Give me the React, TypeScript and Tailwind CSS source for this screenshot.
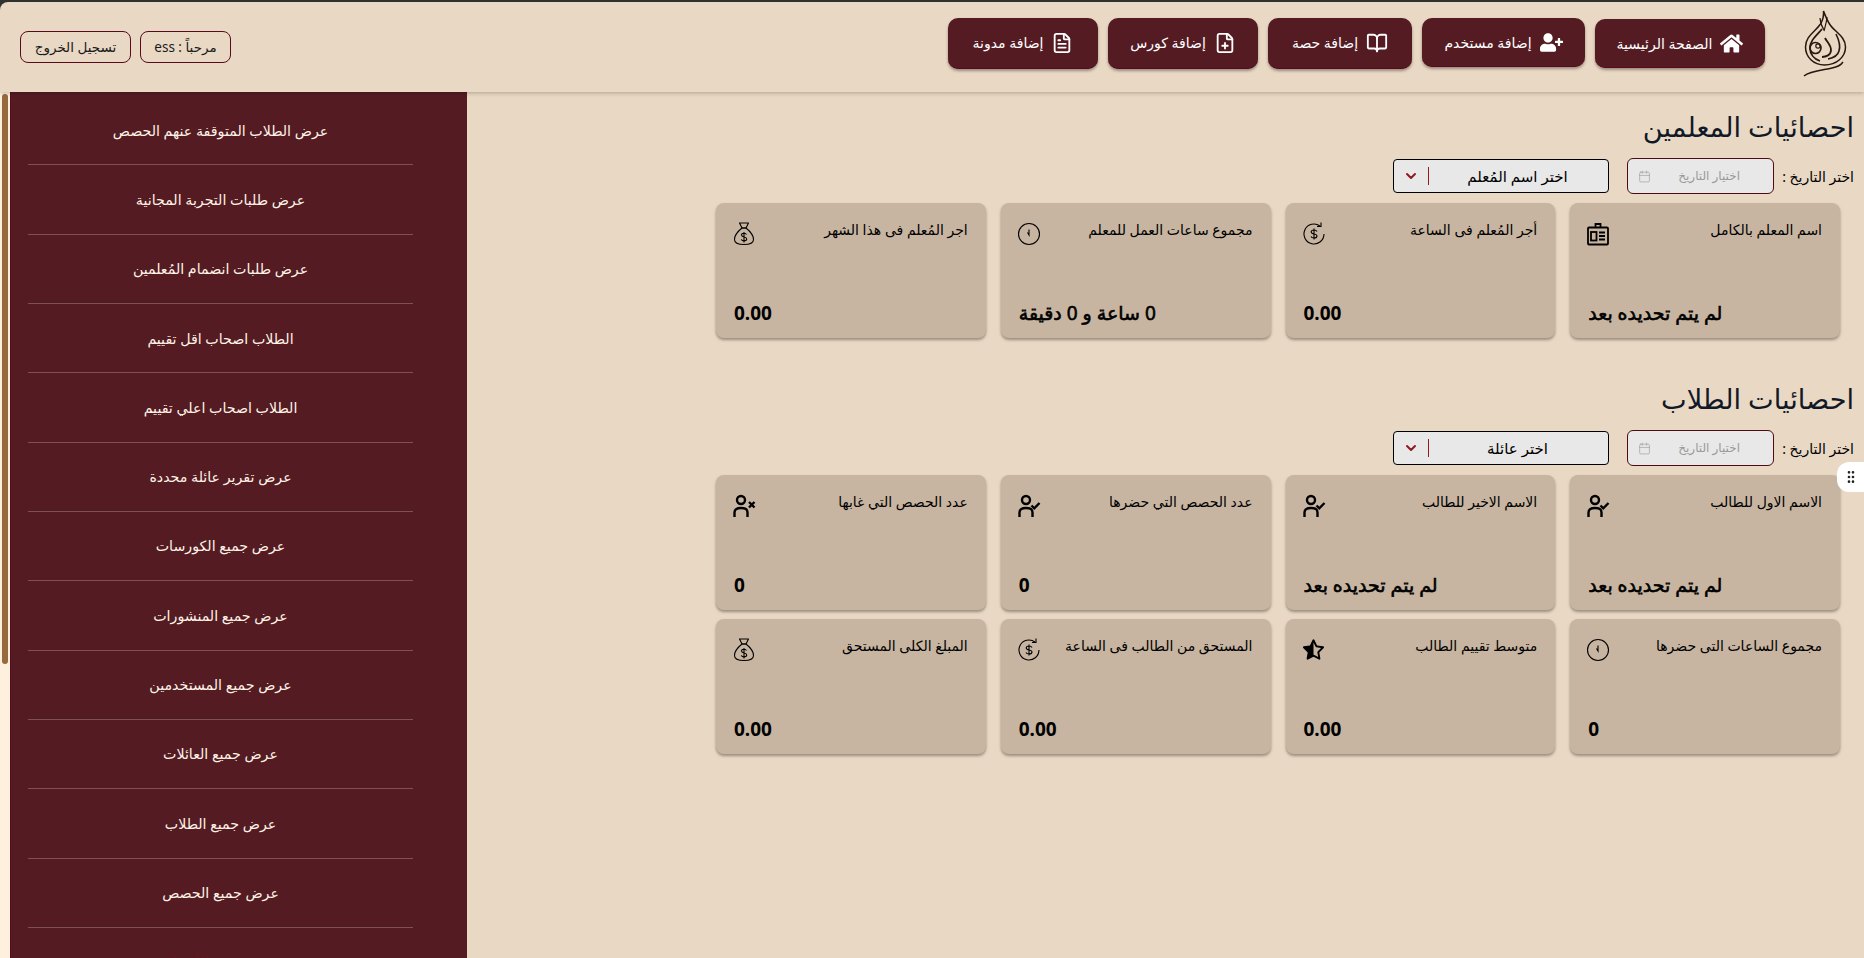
import { ChevronDown, FileText, FilePlus, BookOpen, Calendar, GripVertical } from "lucide-react";
import { FaHome, FaUserPlus } from "react-icons/fa";
import { FaRegStarHalfStroke } from "react-icons/fa6";
import type { ReactNode } from "react";

const FONT = "font-['Noto_Sans','DejaVu_Sans',sans-serif]";

const NAV = [
  { label: "الصفحة الرئيسية", icon: <FaHome size={23} />, size: "w-[170px] h-[49px] mt-px" },
  { label: "إضافة مستخدم", icon: <FaUserPlus size={23} />, size: "w-[163px] h-[49px] -mt-px" },
  { label: "إضافة حصة", icon: <BookOpen size={22} />, size: "w-[144px] h-[51px]" },
  { label: "إضافة كورس", icon: <FilePlus size={22} />, size: "w-[150px] h-[51px]" },
  { label: "إضافة مدونة", icon: <FileText size={22} />, size: "w-[150px] h-[51px]" },
];

const SIDE = [
  "عرض الطلاب المتوقفة عنهم الحصص",
  "عرض طلبات التجربة المجانية",
  "عرض طلبات انضمام المُعلمين",
  "الطلاب اصحاب اقل تقييم",
  "الطلاب اصحاب اعلي تقييم",
  "عرض تقرير عائلة محددة",
  "عرض جميع الكورسات",
  "عرض جميع المنشورات",
  "عرض جميع المستخدمين",
  "عرض جميع العائلات",
  "عرض جميع الطلاب",
  "عرض جميع الحصص",
];

function Logo() {
  return (
    <svg width="44" height="67" viewBox="0 0 44 67" fill="none" stroke="#2a1710" strokeWidth="1.2" className="ml-[28px]">
      <path d="M20.500 1c.5 6-.5 9-3 13C12 22 2.500 26 2.500 37c0 10 8 18 19 18 12 0 21-8 21-18 0-11-11-15-16-23-2.500-4-4-8-6-13z" strokeWidth="1.500" />
      <path d="M17 8c.5 6 2 9 4 12M24 7c-.5 6-2 10-3 14" />
      <path d="M19 19C14 25 7 30 7 38c0 6 4 11 10 13" strokeWidth="1.800" />
      <circle cx="12.500" cy="38" r="5.500" strokeWidth="1.600" />
      <circle cx="15" cy="36" r="2.200" />
      <path d="M22 28c2 4 6 7 6 12 0 5-5 7-9 7" strokeWidth="1.800" />
      <path d="M33 24c3 6 5 11 3 17-1 4-6 7-11 8" strokeWidth="1.600" />
      <path d="M1 66c6-5 20-6 28-8 5-1 9-3 11-6" strokeWidth="1.500" />
    </svg>
  );
}

function MoneyBag() {
  return (
    <svg width="24" height="24" viewBox="0 0 24 24" fill="none" stroke="currentColor" strokeWidth="1.100">
      <path d="M7.500 1h9l-2.500 5h-4z" strokeLinejoin="round" />
      <path d="M10 6C5 10 2.500 14 2.500 17.500c0 3.500 3 5 9.500 5s9.500-1.500 9.500-5C21.500 14 19 10 14 6z" strokeLinejoin="round" />
      <path d="M14.500 12.500c-.5-1-1.500-1.300-2.500-1.300-1.500 0-2.500.7-2.500 1.900 0 2.700 5.200 1.200 5.200 3.900 0 1.200-1.200 1.900-2.700 1.900-1.200 0-2.300-.5-2.700-1.500M12 10v10.500" />
    </svg>
  );
}

function ClockThin() {
  return (
    <svg width="24" height="24" viewBox="0 0 24 24" fill="none" stroke="currentColor" strokeWidth="1.100">
      <circle cx="12" cy="12" r="10.500" />
      <path d="M12 7.500V13L10.500 10.500" />
    </svg>
  );
}

function IdCard() {
  return (
    <svg width="24" height="24" viewBox="0 0 24 24" fill="none" stroke="currentColor" strokeWidth="1.800">
      <rect x="2" y="5.500" width="20" height="17" rx="1" />
      <path d="M9.500 5.500V2h5v3.500" />
      <rect x="5" y="10" width="5.500" height="8.500" />
      <path d="M13 10.500h6M13 14h6M13 17.500h6" />
    </svg>
  );
}

function Refresh() {
  return (
    <svg width="24" height="24" viewBox="0 0 24 24" fill="none" stroke="currentColor" strokeWidth="1.100">
      <path d="M22 12A10 10 0 1 1 18 4" />
      <path d="M19 .5V4.500h-4" />
      <path d="M15 9.500c-.5-1-1.600-1.500-3-1.500-1.600 0-2.800.8-2.800 2 0 2.800 5.800 1.300 5.800 4 0 1.200-1.300 2-3 2-1.400 0-2.600-.6-3-1.500M12 6.500v11" />
    </svg>
  );
}

function Person({ mark }: { mark: "check" | "x" }) {
  return (
    <svg width="24" height="24" viewBox="0 0 24 24" fill="none" stroke="currentColor" strokeWidth="2.400">
      <circle cx="9" cy="6" r="4" />
      <path d="M2.500 23v-4.500c0-3 2-4.500 6.500-4.500s6.500 1.500 6.500 4.500V23" />
      {mark === "check" ? <path d="M14.500 11.500l2.800 2.800L22.500 9" /> : <path d="M17 8l5.500 5.500M22.500 8L17 13.500" />}
    </svg>
  );
}

type Card = { title: string; value: string; icon: ReactNode };

const TEACHER: Card[] = [
  { title: "اسم المعلم بالكامل", value: "لم يتم تحديده بعد", icon: <IdCard /> },
  { title: "أجر المُعلم فى الساعة", value: "0.00", icon: <Refresh /> },
  { title: "مجموع ساعات العمل للمعلم", value: "0 ساعة و 0 دقيقة", icon: <ClockThin /> },
  { title: "اجر المُعلم فى هذا الشهر", value: "0.00", icon: <MoneyBag /> },
];

const STUDENT: Card[] = [
  { title: "الاسم الاول للطالب", value: "لم يتم تحديده بعد", icon: <Person mark="check" /> },
  { title: "الاسم الاخير للطالب", value: "لم يتم تحديده بعد", icon: <Person mark="check" /> },
  { title: "عدد الحصص التي حضرها", value: "0", icon: <Person mark="check" /> },
  { title: "عدد الحصص التي غابها", value: "0", icon: <Person mark="x" /> },
  { title: "مجموع الساعات التى حضرها", value: "0", icon: <ClockThin /> },
  { title: "متوسط تقييم الطالب", value: "0.00", icon: <FaRegStarHalfStroke size={23} /> },
  { title: "المستحق من الطالب فى الساعة", value: "0.00", icon: <Refresh /> },
  { title: "المبلغ الكلى المستحق", value: "0.00", icon: <MoneyBag /> },
];

function StatCard({ title, value, icon }: Card) {
  const numeric = /^[\d.]+$/.test(value);
  return (
    <div className="h-[135px] rounded-lg bg-[#c7b5a1] pr-[18px] pl-[18px] pt-[17px] pb-[11px] shadow-[0_2px_3px_rgba(0,0,0,0.35)] flex flex-col justify-between text-black">
      <div className="flex justify-between items-start">
        <span className="text-[14px] leading-5">{title}</span>
        <span className="shrink-0 -ml-0.5 mt-0.5">{icon}</span>
      </div>
      <div className="flex justify-end">
        {numeric ? (
          <span className="text-[19px] leading-7 font-bold">{value}</span>
        ) : (
          <span className="text-[19px] leading-7 [-webkit-text-stroke:0.6px_black]">{value}</span>
        )}
      </div>
    </div>
  );
}

function Filters({ placeholder }: { placeholder: string }) {
  return (
    <div className="flex items-center h-9 mt-[13px] mb-[9px]">
      <span className="text-[14px] text-black w-[72px] shrink-0">اختر التاريخ :</span>
      <div className="w-[147px] h-9 mr-2 rounded-md border border-[#4f0a14] bg-[#e8e8e8] flex items-center justify-between px-2.5 text-[12px] text-[#9a9a9a]">
        <span className="pr-[23px]">اختيار التاريخ</span>
        <Calendar size={13} strokeWidth={1.2} />
      </div>
      <div className="w-[216px] h-[34px] mr-[18px] rounded border border-black bg-[#e8e8e8] flex items-center text-[15px] text-black">
        <span className="flex-1 text-center pr-0.5 font-normal">{placeholder}</span>
        <span className="w-px h-[18px] bg-[#8f1a1f]" />
        <ChevronDown size={16} strokeWidth={3} className="mx-[9px] text-[#8f1a1f]" />
      </div>
    </div>
  );
}

export default function App() {
  return (
    <div dir="rtl" className={`relative h-[958px] overflow-hidden bg-[#e9d8c3] flex flex-col ${FONT}`}>
      <div className="bg-[#333333] pt-0.5 shrink-0 relative z-10">
        <header className="h-[90px] flex items-center justify-between pr-[17px] pl-5 rounded-tl-lg shadow-[0_1px_4px_rgba(0,0,0,0.25)] bg-[#e9d8c3]">
          <div className="flex items-center gap-2.5 -mt-2">
            <Logo />
            {NAV.map((n) => (
              <button key={n.label} className={`flex items-center justify-center gap-2 rounded-[10px] bg-[#541b23] text-white text-[14px] font-medium shadow-[0_2px_3px_rgba(0,0,0,0.35)] border-b border-[#5a0a1a] ${n.size}`}>
                {n.icon}
                <span>{n.label}</span>
              </button>
            ))}
          </div>
          <div className="flex items-center gap-[9px] text-[13.500px] text-[#1a1a1a]">
            <div className="w-[91px] h-8 rounded-lg border border-[#5a0a1a] flex items-center justify-center">مرحباً : ess</div>
            <div className="w-[111px] h-8 rounded-lg border border-[#5a0a1a] flex items-center justify-center">تسجيل الخروج</div>
          </div>
        </header>
      </div>

      <div className="flex flex-1 min-h-0">
        <main className="flex-1 pr-2.5 pt-[17px]">
          <h2 className="text-[27.200px] leading-9 text-[#111827]">احصائيات المعلمين</h2>
          <Filters placeholder="اختر اسم المُعلم" />
          <div className="grid grid-cols-4 gap-x-[15px] gap-y-[9px] w-[1124px] mr-3.5">
            {TEACHER.map((c) => <StatCard key={c.title} {...c} />)}
          </div>
          <h2 className="text-[27.200px] leading-9 text-[#111827] mt-[43px]">احصائيات الطلاب</h2>
          <Filters placeholder="اختر عائلة" />
          <div className="grid grid-cols-4 gap-x-[15px] gap-y-[9px] w-[1124px] mr-3.5">
            {STUDENT.map((c) => <StatCard key={c.title} {...c} />)}
          </div>
        </main>

        <aside className="w-[457px] shrink-0 bg-[#541b23] border-l border-[#5a0a1a] pr-[54px] pl-[17px] pt-1">
          {SIDE.map((s) => (
            <div key={s} className="h-[69.33px] border-b border-[#7d5156] flex items-center justify-center text-[14.200px] text-[#fff4e6]">
              {s}
            </div>
          ))}
          <div className="h-[69.33px] flex items-center justify-center text-[14.200px] text-[#7a0f1a]">عرض جميع الأقسام</div>
        </aside>

        <div className="w-2.5 shrink-0 bg-[#fdf0dc] pt-0.5 px-0.5">
          <div className="h-[570px] rounded-full bg-[#98683f]" />
        </div>
      </div>

      <div className="absolute right-0 top-[462px] w-[27px] h-[30px] rounded-l-xl bg-white flex items-center justify-center">
        <GripVertical size={16} className="text-[#222]" />
      </div>
    </div>
  );
}
